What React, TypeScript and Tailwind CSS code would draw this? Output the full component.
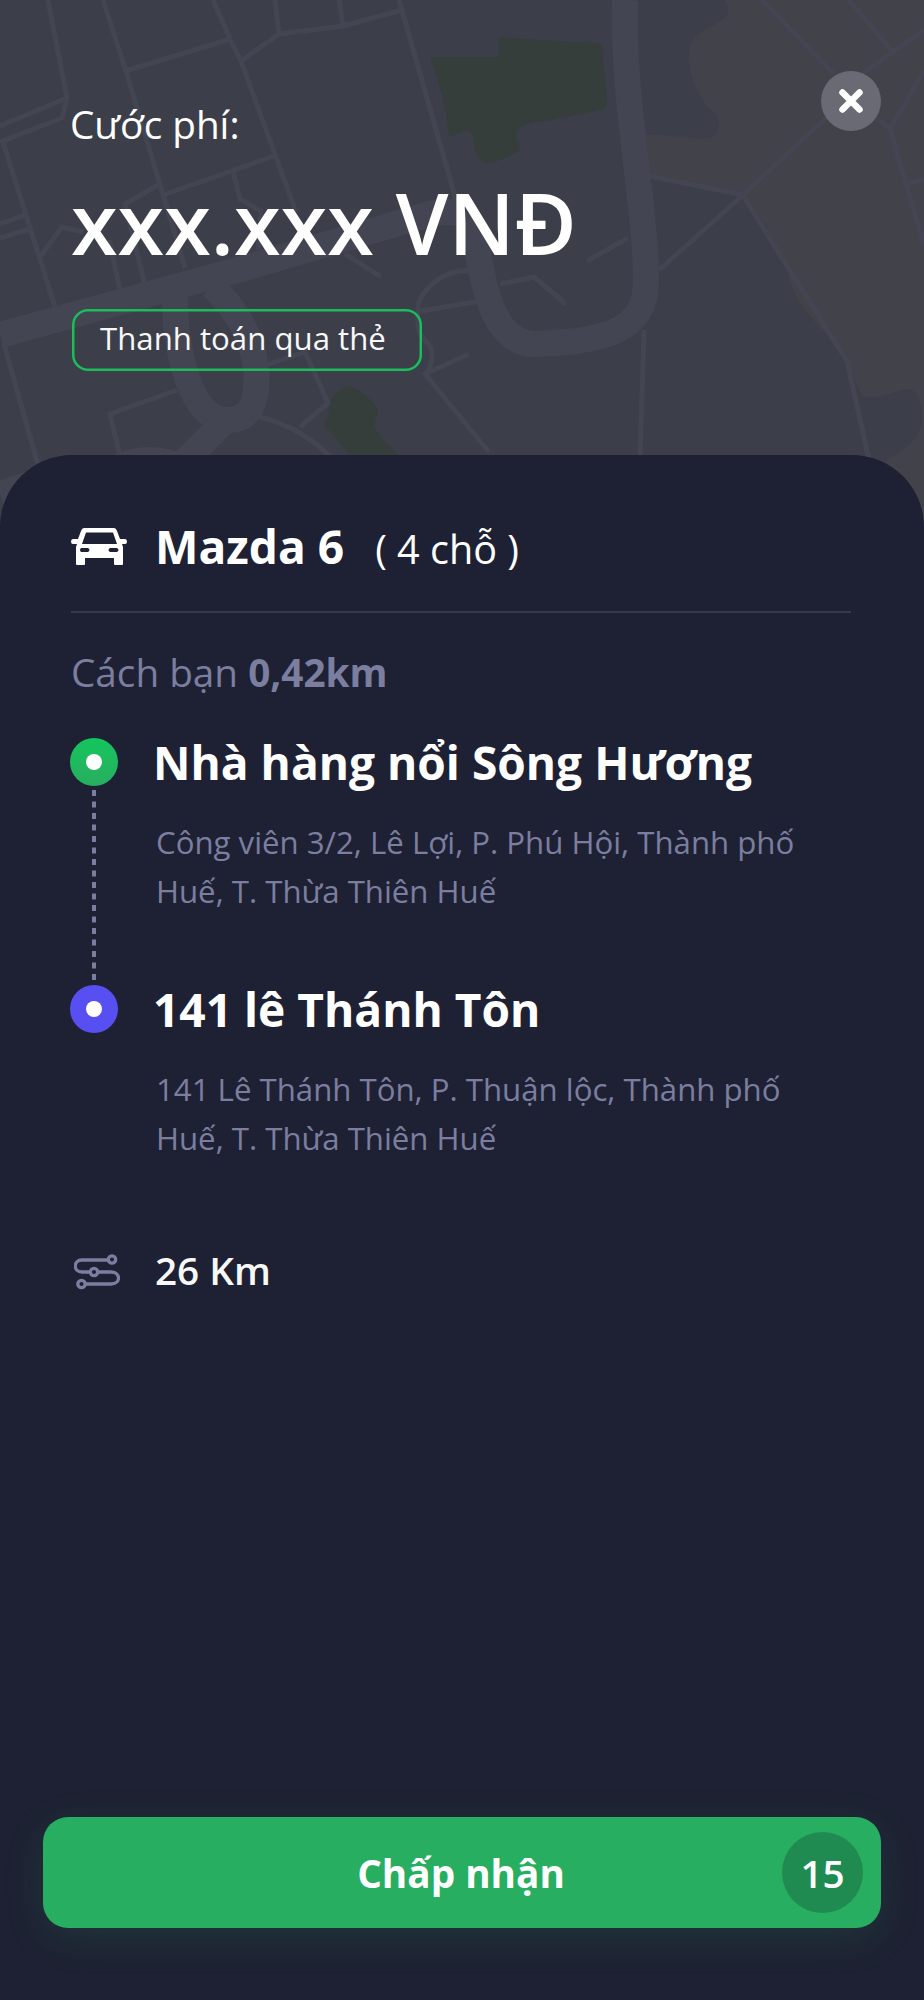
import React from 'react';

function MapBackground() {
  return (
    <svg className="absolute inset-0" width="924" height="560" viewBox="0 0 924 560" fill="none">
      <rect width="924" height="560" fill="#3c3e49" />
      <path
        d="M725 0C728 8 731 11 725 17C710 30 694 32 690 46C686 66 694 85 702 99C710 113 719 111 719 123C719 138 710 139 694 138C675 137 660 134 645 135L648 174L742 195L764 222L787 268C791 292 800 308 829 336L848 365C858 382 857 397 869 397C886 398 897 389 909 389C919 390 923 409 922 420C920 441 905 449 886 461L870 480L924 560V0Z"
        fill="#42424a"
      />
      <path
        d="M430 57H496Q499 57 499 53V41Q499 37 503 37L522 39L598 43Q601 43 602 47L607 101Q608 110 596 111L552 120L531 123Q514 127 517 139Q521 149 519 151Q503 160 490 163Q480 164 475 150C473 137 473 130 464 131L449 137C447 105 439 85 430 57Z"
        fill="#363e3c"
      />
      <path
        d="M348 386C357 388 373 398 377 409C380 419 370 423 377 431C384 442 395 450 401 460V480H370L324 424C333 410 326 402 335 395Q345 386 348 386Z"
        fill="#363e3c"
      />
      <g stroke="#444552" strokeWidth="5">
        <path d="M48 0L67 98L62 118L0 142M67 98L0 126M3 142L56 310M0 224L25 215M0 238L29 229M40 257L62 227L83 232M103 0L126 71L185 268M126 71L230 39M213 0L230 39L241 61L296 212M241 61L279 34L275 0M279 34L343 26L339 0M343 26L402 10L399 0M399 0L456 200" />
        <path d="M163 195L274 156M233 171L240 199L261 211L258 250M158 185L125 204L145 285M109 240L120 290M345 254L381 277M4 344L38 465M121 460L110 414L177 390M260 367L305 352L328 403L300 427M260 417C291 425 317 441 337 464" />
        <path d="M462 270C430 277 417 298 418 311C416 349 432 335 432 356Q432 367 425 374L489 452M425 374L469 354M421 311L480 301M462 271L476 270M500 284L534 277L566 304M587 261L628 238M650 176L743 195L659 270M743 195L829 115M862 74L924 30M762 0L834 74M849 0L894 53M877 118L890 129L924 71M890 129L924 245M908 184L924 179M743 195L777 250L847 361L869 460M644 330L640 460" />
      </g>
      <g stroke="#444552" strokeWidth="26">
        <path d="M0 335L255 265L430 214C460 208 475 214 477 248C484 288 494 344 535 344C600 341 646 334 646 281C646 205 622 100 625 0" />
        <path d="M175 295C175 345 188 420 228 420C254 420 258 395 256 368C252 335 235 308 212 286" />
        <path d="M226 420L180 466M100 478Q150 442 200 478M0 494L60 474" />
      </g>
    </svg>
  );
}

function CarIcon() {
  return (
    <svg className="shrink-0" width="56" height="38" viewBox="0 0 56 38" fill="none">
      <path d="M13 0H43Q45 0 46 3L49 11H54Q56 11 56 13.5Q56 16 54 16H51L52 19V36Q52 37 51 37H44Q43 37 43 36V30H14V36Q14 37 13 37H6Q5 37 5 36V19L6 16H2Q0 16 0 13.5Q0 11 2 11H7L10 3Q11 0 13 0ZM15 4.5L11 16H46L42 4.5ZM10 20Q8 22 10 24H17Q20 22 17 20ZM39 20Q36 22 39 24H46Q49 22 46 20Z" fill="white" fillRule="evenodd" />
    </svg>
  );
}

function RouteIcon() {
  return (
    <svg className="shrink-0" width="46" height="36" viewBox="0 0 46 36" fill="none" stroke="#7c7ea0" strokeWidth="3.3">
      <path d="M34 6H8C-1 6 -1 18 8 18H16M24 18H37C47 18 47 30 37 30H11" />
      <circle cx="38" cy="5.5" r="3.7" />
      <circle cx="20" cy="18" r="3.7" />
      <circle cx="7.5" cy="30" r="3.7" />
    </svg>
  );
}

function StopMarker({ color }: { color: string }) {
  return (
    <span className={`flex size-12 shrink-0 items-center justify-center rounded-full ${color}`}>
      <span className="size-4 rounded-full bg-white" />
    </span>
  );
}

function Stop({ name, lines, color, linked }: { name: string; lines: string[]; color: string; linked?: boolean }) {
  return (
    <div className="flex h-[247px] gap-[35px]">
      <div className="flex w-12 flex-col items-center">
        <StopMarker color={color} />
        {linked && (
          <svg className="mt-1" width="4" height="190" viewBox="0 0 4 190">
            <path d="M2 0V190" stroke="#7c7ea0" strokeWidth="4" strokeDasharray="6 5.5" />
          </svg>
        )}
      </div>
      <div className="whitespace-nowrap">
        <h2 className="text-[46.1px] leading-[50px] font-bold">{name}</h2>
        <p className="mt-[30px] pl-[3px] text-[31.2px] leading-[49px] text-[#7c7ea0]">
          {lines.map((line) => (
            <span key={line} className="block">{line}</span>
          ))}
        </p>
      </div>
    </div>
  );
}

export default function App() {
  return (
    <div className="relative h-[2000px] w-[924px] overflow-hidden bg-[#1e2133] font-['Open_Sans','Noto_Sans',sans-serif] text-white">
      <MapBackground />
      <div className="relative flex h-full flex-col">
        <header className="flex h-[455px] justify-between pt-[71px] pr-[43px] pl-[70px] whitespace-nowrap">
          <div>
            <p className="mt-[29px] text-[38.7px] leading-[48px]">Cước phí:</p>
            <p className="mt-[24px] ml-px text-[84.6px] leading-[102px] font-semibold">xxx.xxx VNĐ</p>
            <div className="mt-[35px] ml-[2px] flex h-[62px] w-[350px] items-center rounded-[16px] pl-[28px] text-[31.2px] text-[#f8f8f8] shadow-[inset_0_0_0_2.5px_#1abc5b]">
              <span className="-mt-1 leading-[54px]">Thanh toán qua thẻ</span>
            </div>
          </div>
          <button className="flex size-[60px] items-center justify-center rounded-full bg-[#6a6a74]" aria-label="Đóng">
            <svg width="24" height="24" viewBox="0 0 24 24" stroke="white" strokeWidth="6.5" strokeLinecap="round">
              <path d="M3.5 3.5L20.5 20.5M20.5 3.5L3.5 20.5" />
            </svg>
          </button>
        </header>
        <main className="flex grow flex-col rounded-t-[72px] bg-[#1e2133] pt-[61px] pr-[73px] pl-[70px]">
          <div className="ml-px flex h-[97px] items-start border-b-2 border-[#37394b] whitespace-nowrap">
            <div className="flex h-[62px] items-center">
              <CarIcon />
            </div>
            <span className="ml-[28px] text-[46.1px] leading-[62px] font-bold">Mazda 6</span>
            <span className="ml-[31px] text-[39.6px] leading-[67px]">( 4 chỗ )</span>
          </div>
          <p className="mt-[33px] ml-px text-[38.7px] leading-[52px] text-[#7c7ea0]">
            Cách bạn <b className="font-bold">0,42km</b>
          </p>
          <div className="mt-[40px]">
            <Stop
              name="Nhà hàng nổi Sông Hương"
              lines={['Công viên 3/2, Lê Lợi, P. Phú Hội, Thành phố', 'Huế, T. Thừa Thiên Huế']}
              color="bg-linear-to-b from-[#11c65c] to-[#27ae60]"
              linked
            />
            <Stop
              name="141 lê Thánh Tôn"
              lines={['141 Lê Thánh Tôn, P. Thuận lộc, Thành phố', 'Huế, T. Thừa Thiên Huế']}
              color="bg-[#584ff2]"
            />
          </div>
          <div className="mt-[18px] flex h-[40px] items-center gap-[35px] pl-[4px]">
            <div className="pt-1"><RouteIcon /></div>
            <span className="text-[38.7px] leading-[40px] font-semibold text-[#f8f8f8]">26 Km</span>
          </div>
          <button className="relative mt-auto mb-[72px] -ml-[27px] flex h-[111px] w-[838px] items-center justify-center rounded-[25px] bg-[#27ae60] text-[38.7px] font-bold shadow-[0_10px_40px_rgba(39,174,96,0.14)]">
            <span className="-ml-0.5 pt-px">Chấp nhận</span>
            <span className="absolute right-[18px] flex size-[81px] items-center justify-center rounded-full bg-[#208b50] pt-px font-semibold">15</span>
          </button>
        </main>
      </div>
    </div>
  );
}
